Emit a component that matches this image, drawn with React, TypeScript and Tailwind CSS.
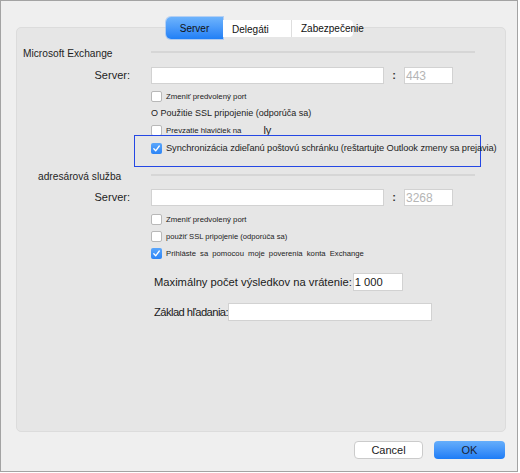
import React from "react";

const font = { fontFamily: '"Liberation Sans", Arial, sans-serif' };

function Box({ checked = false }: { checked?: boolean }) {
  return checked ? (
    <span className="flex h-[11px] w-[11px] shrink-0 items-center justify-center rounded-[2px] bg-gradient-to-b from-[#5aa6fb] to-[#2a84f6]">
      <svg width="9" height="9" viewBox="0 0 9 9">
        <polyline points="1.8,4.8 3.7,6.8 7.3,2" fill="none" stroke="#fff" strokeWidth="1.3" strokeLinecap="round" strokeLinejoin="round" />
      </svg>
    </span>
  ) : (
    <span className="h-[11px] w-[11px] shrink-0 rounded-[2px] border border-[#b8b8b8] bg-white" />
  );
}

function SectionHead({ label, pad }: { label: string; pad: string }) {
  return (
    <div className="flex h-[18px]">
      <div className={`w-[134px] shrink-0 text-[10.2px] leading-[18px] text-[#1e1e1e] ${pad}`}>{label}</div>
      <div className="mt-[6px] h-[2px] w-[324px] bg-[#d6d6d6]" />
    </div>
  );
}

function ServerRow({ port }: { port: string }) {
  return (
    <div className="flex h-[17px] items-center">
      <div className="w-[134px] shrink-0 pr-[21px] text-right text-[11px] text-[#1e1e1e]">Server:</div>
      <div className="h-[17px] w-[233px] border border-[#d2d2d2] bg-white" />
      <div className="w-[20px] text-center text-[11px] font-bold text-[#333]">:</div>
      <div className="flex h-[17px] w-[49px] items-center border border-[#d2d2d2] bg-white pl-[1px] text-[12px] text-[#b5b5b5]">{port}</div>
    </div>
  );
}

function CheckRow({ checked, children, className = "" }: { checked?: boolean; children: React.ReactNode; className?: string }) {
  return (
    <div className={`flex h-[13px] items-center gap-[4px] whitespace-nowrap ${className}`}>
      <Box checked={checked} />
      {children}
    </div>
  );
}

export default function App() {
  return (
    <div className="h-[473px] w-[520px] bg-white" style={font}>
      <div className="flex h-[472px] w-[518px] flex-col border border-[#a3a3a3] bg-[#efefef]">
        <div className="ml-[15px] mt-[26px] flex h-[405px] w-[490px] flex-col rounded-[5px] border border-[#dcdcdc] bg-[#e6e6e6]">
          {/* tab strip */}
          <div className="-mt-[11px] ml-[149px] flex h-[22px] items-center">
            <div className="flex h-[22px] w-[57px] items-center justify-center rounded-l-[5px] bg-gradient-to-b from-[#6db3fc] to-[#1f7ff6] text-[10px] text-[#111] shadow-[0_0_0_1px_rgba(140,185,245,0.6)]">
              Server
            </div>
            <div className="flex h-[17px] w-[69px] items-center border-r border-[#dedede] bg-white pl-[9px] pt-[2px] text-[10px] text-[#111]">
              Delegáti
            </div>
            <div className="flex h-[17px] w-[61px] items-center whitespace-nowrap rounded-r-[4px] bg-white pl-[9px] text-[10px] text-[#111]">
              Zabezpečenie
            </div>
          </div>

          <div className="mt-[6px]">
            <SectionHead label="Microsoft Exchange" pad="pl-[6px]" />
          </div>
          <div className="mt-[4px]">
            <ServerRow port="443" />
          </div>
          <CheckRow className="ml-[134px] mt-[6px]">
            <span className="text-[7.8px] text-[#222]">Zmeniť predvolený port</span>
          </CheckRow>
          <div className="ml-[134px] mt-[4px] flex h-[14px] items-center text-[9px] text-[#222]">
            O Použitie SSL pripojenie (odporúča sa)
          </div>
          <CheckRow className="ml-[134px] mt-[3px]">
            <span className="text-[7.8px] text-[#222]">Prevzatie hlavičiek na</span>
            <span className="ml-[18px] text-[11px] text-[#222]">ly</span>
          </CheckRow>
          <div className="ml-[117px] -mt-[2px] h-[32px] w-[347px] border border-[#2447e4] pl-[16px] pt-[6px]">
            <CheckRow checked>
              <span className="text-[9.3px] tracking-[-0.1px] text-[#1e1e1e]">
                Synchronizácia zdieľanú poštovú schránku (reštartujte Outlook zmeny sa prejavia)
              </span>
            </CheckRow>
          </div>

          <div className="mt-[1px]">
            <SectionHead label="adresárová služba" pad="pl-[21px]" />
          </div>
          <div className="mt-[3px]">
            <ServerRow port="3268" />
          </div>
          <CheckRow className="ml-[134px] mt-[7px]">
            <span className="text-[7.8px] text-[#222]">Zmeniť predvolený port</span>
          </CheckRow>
          <CheckRow className="ml-[134px] mt-[4px]">
            <span className="text-[7.6px] text-[#222]">použiť SSL pripojenie (odporúča sa)</span>
          </CheckRow>
          <CheckRow checked className="ml-[134px] mt-[4px]">
            <span className="text-[7.7px] text-[#222] [word-spacing:2px]">Prihláste sa pomocou moje poverenia konta Exchange</span>
          </CheckRow>

          <div className="ml-[137px] mt-[13px] flex h-[18px] items-center">
            <span className="text-[11.2px] text-[#1a1a1a]">Maximálny počet výsledkov na vrátenie:</span>
            <div className="ml-[1px] flex h-[18px] w-[50px] items-center border border-[#d2d2d2] bg-white pl-[1px] text-[11.2px] text-[#1a1a1a]">
              1 000
            </div>
          </div>
          <div className="ml-[137px] mt-[12px] flex h-[18px] items-center">
            <span className="text-[11.2px] tracking-[-0.55px] text-[#1a1a1a]">Základ hľadania:</span>
            <div className="h-[18px] w-[204px] border border-[#d2d2d2] bg-white" />
          </div>
        </div>

        {/* dialog buttons */}
        <div className="mt-[9px] flex justify-end gap-[11px] pr-[12px]">
          <button className="flex h-[18px] w-[69px] items-center justify-center rounded-[4px] border border-[#cbcbcb] bg-white text-[11px] text-[#1a1a1a]">
            Cancel
          </button>
          <button className="flex h-[18px] w-[71px] items-center justify-center rounded-[4px] bg-gradient-to-b from-[#65aefb] to-[#1c7cf6] text-[11px] text-[#1a2433]">
            OK
          </button>
        </div>
      </div>
    </div>
  );
}
